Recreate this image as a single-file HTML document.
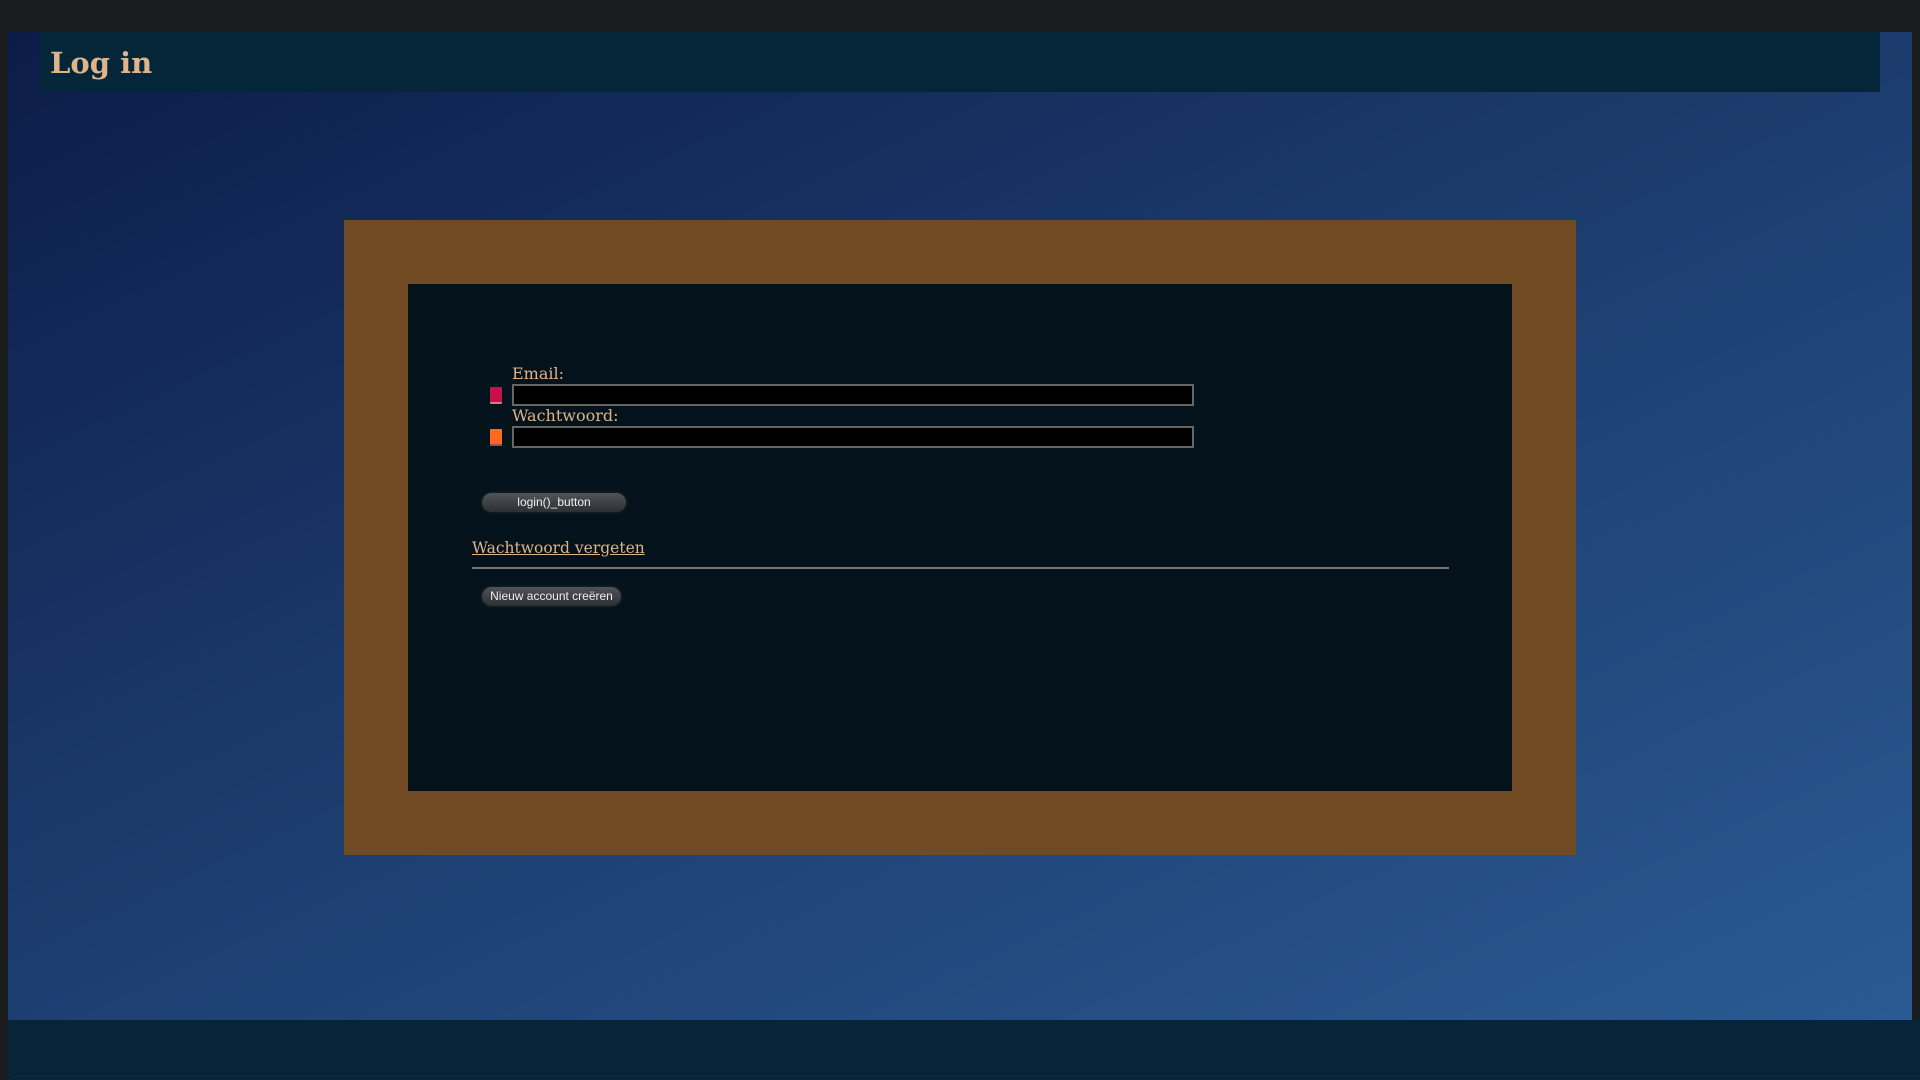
<!DOCTYPE html>
<html><head><meta charset="utf-8"><style>
*{margin:0;padding:0;box-sizing:border-box}
html,body{width:1920px;height:1080px;overflow:hidden;background:#1a1b1d;position:relative}
.main{position:absolute;left:8px;top:32px;width:1904px;height:988px;background:linear-gradient(155deg,#0c1c48 0%,#1b3a6c 45%,#2a5a92 100%)}
.footer{position:absolute;left:8px;top:1020px;width:1912px;height:60px;background:#062539}
.footer:after{content:"";position:absolute;left:4px;right:0;top:56px;height:1px;background:#0e2e42}
.header{position:absolute;left:40px;top:32px;width:1840px;height:60px;background:#052539}
.header h1{position:absolute;left:10px;top:14px;font:bold 29px "DejaVu Serif",serif;color:#deb48a}
.brown{position:absolute;left:344px;top:220px;width:1232px;height:635px;background:#704a22}
.inner{position:absolute;left:408px;top:284px;width:1104px;height:507px;background:#04121b}
.lbl{position:absolute;left:512px;font:16px "DejaVu Serif",serif;color:#deb48a}
.inp{position:absolute;left:512px;width:682px;height:22px;background:#000;border:2px solid #666}
.ic{position:absolute;left:490px;width:12px;height:17px;border-radius:1px}
.btn{position:absolute;height:19px;border-radius:10px;background:linear-gradient(#505458,#2c3034);box-shadow:0 0 4px rgba(200,200,200,.15);color:#eee;font:12px "Liberation Sans",sans-serif;text-align:center;line-height:19px}
.link{position:absolute;left:472px;top:539px;font:15.5px "DejaVu Serif",serif;color:#deb48a;text-decoration:underline}
.hr{position:absolute;left:472px;top:567px;width:977px;height:2px;background:#777}
</style></head><body>
<div class="main"></div>
<div class="footer"></div>
<div class="header"><h1>Log in</h1></div>
<div class="brown"></div>
<div class="inner"></div>
<div class="lbl" style="top:364px">Email:</div>
<div class="ic" style="top:387px;background:#c8104a;border-bottom:2px solid #e07090"></div>
<div class="inp" style="top:384px"></div>
<div class="lbl" style="top:406px">Wachtwoord:</div>
<div class="ic" style="top:429px;background:#ff6a20;border-bottom:2px solid #c04050"></div>
<div class="inp" style="top:426px"></div>
<div class="btn" style="left:482px;top:493px;width:144px">login()_button</div>
<div class="link">Wachtwoord vergeten</div>
<div class="hr"></div>
<div class="btn" style="left:482px;top:587px;width:139px">Nieuw account creëren</div>
</body></html>
